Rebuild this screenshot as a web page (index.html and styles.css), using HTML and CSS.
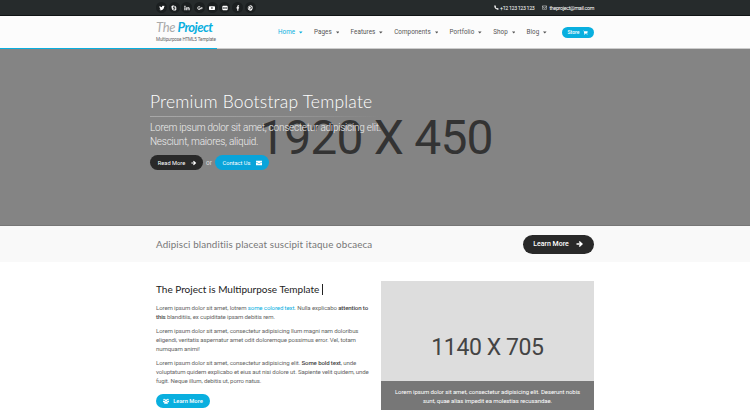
FILE: index.html
```html
<!DOCTYPE html>
<html lang="en">
<head>
<meta charset="utf-8">
<title>The Project</title>
<link rel="stylesheet" href="styles.css">
</head>
<body>
<div class="topbar">
  <div class="container topbar-row">
    <ul class="social">
      <li><svg viewBox="0 0 16 16"><path d="M15 4l-1.500 1.500C13.500 11 9.500 14 5.500 14 3.500 14 2 13.500 1 12.600c1.700 0 3-.4 4-1.200-1.400-.2-2.300-1-2.700-2h1.200C2 8.800 1.200 7.700 1.200 6.300l1.200.3C1.200 5.500 1 4 1.700 2.600 3.300 4.500 5.300 5.600 8 5.700 7.600 3.500 9 2 10.800 2c.9 0 1.600.4 2.100.9L14.700 2.200 13.800 3.800z"/></svg></li>
      <li><svg viewBox="0 0 16 16"><path fill-rule="evenodd" d="M5 1a4 4 0 0 1 3 1 6 6 0 0 1 6 7.500A4 4 0 0 1 8.500 14.500 6 6 0 0 1 2 7.500 4 4 0 0 1 5 1zM8 4C4 4 4 8 7 8.500c3 .5 2.500 2 1 2S6.500 9 5.500 9C3.500 9.500 5 12.300 8 12.300c4.500 0 4.500-4.300 1-5C6.500 6.800 6.500 6 8 6s1.500 1 2.500 1C12.500 6.500 11 4 8 4z"/></svg></li>
      <li><svg viewBox="0 0 16 16"><path d="M1 6h3v8H1zM1 2h3v3H1zM6 6h3v1c1-2 6-2 6 2v5h-3V9.500C12 8 9 8 9 9.500V14H6z"/></svg></li>
      <li><svg viewBox="0 0 16 16"><path d="M5.500 7v2h2.700c-.6 2.600-5 2-5-1s3.300-3.500 4.500-2L9 4.500C6 1.500 1 3.500 1 8s4.500 6 7.500 4c1.700-1.200 2-3 1.700-5zM12 5h1.500v2H16v1.700h-2.500V11H12V8.700h-2V7h2z"/></svg></li>
      <li><svg viewBox="0 0 16 16"><path fill-rule="evenodd" d="M2 3h12q2 0 2 2v6q0 2-2 2H2q-2 0-2-2V5q0-2 2-2zM6.500 5.500v5L11 8z"/></svg></li>
      <li><svg viewBox="0 0 16 16"><path fill-rule="evenodd" d="M3 2h10q2 0 2 2v8q0 2-2 2H3q-2 0-2-2V4q0-2 2-2zM3.500 6v4h3.500V6zM9 6v4h3.500V6z"/></svg></li>
      <li><svg viewBox="0 0 16 16"><path d="M6 15V9H4V6h2V4c0-2.500 2-3.500 5-3v2.500C9.500 3.300 9 3.500 9 4.500V6h2l-.4 3H9v6z"/></svg></li>
      <li><svg viewBox="0 0 16 16"><path fill-rule="evenodd" d="M8 1a7 7 0 1 1-2 13.700L7 11 8 7h1l-1 3c3 0 3.500-5 0-5.200S4 7.500 5.500 9L5 10C1.500 7.500 4 3 8 3s5.500 3 4 6-3.500 3-4.500 2l-1 3.500A7 7 0 0 1 8 1z"/></svg></li>
    </ul>
    <div class="contact">
      <svg viewBox="0 0 16 16"><path d="M4 1l2.500 4L5 6.500C6 8.500 7.500 10 9.500 11L11 9.500l4 2.500c0 2-1.500 3-3 3C6 15 1 9 1 4c0-1.500 1-3 3-3z"/></svg><span class="phone">+12 123 123 123</span>
      <svg class="mail" viewBox="0 0 16 16"><path class="line" d="M1 3h14v10.500H1zM1 5l7 5 7-5"/></svg><span class="email">theproject@mail.com</span>
    </div>
  </div>
</div>
<header class="header">
  <div class="container header-row">
    <div class="brand">
      <div class="logo"><span class="the">The</span> <span class="project">Project</span></div>
      <div class="slogan">Multipurpose HTML5 Template</div>
    </div>
    <nav class="nav">
      <a class="active">Home<svg viewBox="0 0 8 6"><path d="M0 1h8L4 5.500z"/></svg></a>
      <a>Pages<svg viewBox="0 0 8 6"><path d="M0 1h8L4 5.500z"/></svg></a>
      <a>Features<svg viewBox="0 0 8 6"><path d="M0 1h8L4 5.500z"/></svg></a>
      <a>Components<svg viewBox="0 0 8 6"><path d="M0 1h8L4 5.500z"/></svg></a>
      <a>Portfolio<svg viewBox="0 0 8 6"><path d="M0 1h8L4 5.500z"/></svg></a>
      <a>Shop<svg viewBox="0 0 8 6"><path d="M0 1h8L4 5.500z"/></svg></a>
      <a>Blog<svg viewBox="0 0 8 6"><path d="M0 1h8L4 5.500z"/></svg></a>
    </nav>
    <a class="store">Store <svg viewBox="0 0 16 16"><path d="M0 2h3l.5 2H15l-1 5.500-9 1V11.500h9V12.500H4L2.500 3H0z"/><circle cx="5" cy="14" r="1.500"/><circle cx="13" cy="14" r="1.500"/></svg></a>
  </div>
  <div class="progress"></div>
</header>
<section class="banner">
  <div class="size-label">1920 X 450</div>
  <div class="banner-copy">
    <h1>Premium Bootstrap Template</h1>
    <div class="rule"></div>
    <p>Lorem ipsum dolor sit amet, consectetur adipisicing elit.<br>Nesciunt, maiores, aliquid.</p>
    <div class="actions">
      <a class="btn dark">Read More<svg viewBox="0 0 16 16"><path d="M1 6.500h7L5.500 4 7.500 2l6.500 6-6.500 6-2-2L8 9.500H1z"/></svg></a>
      <span class="or">or</span>
      <a class="btn blue">Contact Us<svg viewBox="0 0 16 16"><path d="M0 2h16v2.500L8 9 0 4.500zM0 6l8 4.500L16 6v8H0z"/></svg></a>
    </div>
  </div>
</section>
<section class="cta">
  <div class="container cta-row">
    <span class="cta-text">Adipisci blanditiis placeat suscipit itaque obcaeca</span>
    <a class="cta-btn">Learn More<svg viewBox="0 0 16 16"><path d="M1 6.500h7L5.500 4 7.500 2l6.500 6-6.500 6-2-2L8 9.500H1z"/></svg></a>
  </div>
</section>
<main class="container main">
  <article class="copy">
    <h2>The Project is Multipurpose Template<span class="caret"></span></h2>
    <p>Lorem ipsum dolor sit amet, lotrem <a>some colored text</a>. Nulla explicabo <b>attention to<br>this</b> blanditiis, ex cupiditate ipsam debitis rem.</p>
    <p>Lorem ipsum dolor sit amet, consectetur adipisicing llum magni nam doloribus<br>eligendi, veritatis aspernatur amet odit doloremque possimus error. Vel, totam<br>numquam animi!</p>
    <p>Lorem ipsum dolor sit amet, consectetur adipisicing elit. <b>Some bold text</b>, unde<br>voluptatum quidem explicabo et eius aut nisi dolore ut. Sapiente velit quidem, unde<br>fugit. Neque illum, debitis ut, porro natus.</p>
    <a class="more"><svg viewBox="0 0 16 16"><circle cx="3" cy="4" r="2.200"/><circle cx="13" cy="4" r="2.200"/><circle cx="8" cy="6" r="3"/><path d="M0 7h4l2 3-2 1H0zM16 7h-4l-2 3 2 1h4zM3 15q0-6 3-6h4q3 0 3 6z"/></svg>Learn More</a>
  </article>
  <figure class="picture">
    <div class="picture-size">1140 X 705</div>
    <figcaption>Lorem ipsum dolor sit amet, consectetur adipisicing elit. Deserunt nobis<br>sunt, quae alias impedit ea molestias recusandae.</figcaption>
  </figure>
</main>
</body>
</html>
```
FILE: styles.css
```css
* { box-sizing: border-box; }
body { margin: 0; height: 410px; overflow: hidden; background: #fff; font-family: Roboto, "Liberation Sans", sans-serif; color: #666; white-space: nowrap; }
h1, h2, p, ul, figure { margin: 0; padding: 0; }
svg { display: block; fill: currentColor; flex: none; }
.container { width: 438px; margin-left: 156px; }
.topbar { height: 16px; background: #262b2c; border-bottom: 1px solid #101415; }
.topbar-row { display: flex; justify-content: space-between; align-items: center; height: 15px; }
.social { display: flex; gap: 1.700px; list-style: none; }
.social li { display: flex; align-items: center; justify-content: center; width: 11px; height: 11px; border-radius: 50%; background: #1b1f20; color: #fff; }
.social svg { width: 6px; height: 6px; }
.contact { display: flex; align-items: center; color: #fff; font-size: 5.300px; }
.phone { letter-spacing: -0.360px; }
.email { letter-spacing: -0.310px; }
.contact svg { width: 5px; height: 5px; margin-right: 1px; }
.contact .mail { margin: 0 2px 0 8px; }
.line { fill: none; stroke: currentColor; stroke-width: 1.500; }
.header { height: 33px; background: #fcfcfc; }
.header-row { display: flex; height: 32px; }
.progress { height: 1px; background: linear-gradient(90deg, #09afdf 217px, #ccc 217px); }
.brand { width: 122px; padding-top: 3px; }
.logo { height: 17px; font: italic 700 13px/17px Lato, cursive; letter-spacing: -0.550px; }
.the { color: #aaa; font-weight: 400; letter-spacing: -0.300px; }
.project { color: #09afdf; }
.slogan { font-size: 4.600px; line-height: 6px; margin-top: 1px; letter-spacing: -0.130px; }
.nav { display: flex; gap: 11.200px; padding-top: 11px; height: 22px; font-size: 6.300px; line-height: 11px; letter-spacing: 0.060px; color: #555; }
.nav a { display: flex; align-items: center; height: 11px; }
.nav svg { width: 3.600px; height: 2.700px; margin-left: 4px; }
.nav .active { color: #09afdf; }
.store { display: flex; align-items: center; justify-content: center; gap: 4px; width: 32px; height: 11px; margin: 11px 0 0 auto; border-radius: 6px; background: #09afdf; color: #fff; font: 500 5px/11px Roboto, sans-serif; }
.store svg { width: 5px; height: 5px; }
.banner { position: relative; height: 177px; background: #848484; border-bottom: 1px solid #777; }
.size-label { position: absolute; left: 258px; top: 61px; font-size: 48px; line-height: 56px; letter-spacing: -0.800px; color: #333; }
.banner-copy { position: relative; padding: 42px 0 0 150px; color: #fff; }
h1 { font: 300 17.500px/22px Lato, sans-serif; letter-spacing: 0.190px; }
.rule { width: 230px; height: 1px; margin: 3px 0 4px; background: linear-gradient(90deg, #a8a8a8, #989898 60%, transparent); }
.banner-copy p { font-size: 10px; font-weight: 300; line-height: 14px; letter-spacing: -0.230px; color: #eee; }
.actions { display: flex; align-items: center; margin-top: 6px; }
.btn { display: flex; align-items: center; justify-content: center; gap: 6px; height: 15px; border-radius: 8px; font-size: 5.700px; }
.btn svg { width: 6px; height: 6px; }
.dark { width: 53px; padding-left: 2px; background: #292929; }
.blue { width: 54px; padding-left: 1px; background: #09a4da; }
.or { width: 12px; text-align: center; font-size: 6.500px; color: #ddd; }
.cta { height: 36px; background: #f9f9f9; }
.cta-row { display: flex; align-items: center; justify-content: space-between; height: 36px; }
.cta-text { font: 400 9.800px/14px Lato, sans-serif; letter-spacing: 0.130px; margin-top: -1px; color: #777; }
.cta-btn { display: flex; align-items: center; justify-content: center; gap: 7px; width: 71px; height: 19px; border-radius: 10px; background: #292929; color: #fff; font-size: 7px; font-weight: 500; }
.cta-btn svg { width: 8px; height: 8px; }
.main { display: flex; justify-content: space-between; padding-top: 19px; }
.copy { width: 220px; }
h2 { display: flex; align-items: center; height: 16px; margin-bottom: 7px; font: 400 10px/16px Lato, sans-serif; color: #222; }
.caret { width: 1px; height: 11px; margin-left: 3px; background: #222; }
.copy p { font-size: 6.100px; line-height: 8.600px; margin-bottom: 6.200px; letter-spacing: -0.130px; }
.copy p a { color: #09afdf; }
.copy b { font-weight: 500; color: #444; }
.more { display: flex; align-items: center; justify-content: center; gap: 4px; width: 54px; height: 14px; margin-top: 8.500px; border-radius: 7px; background: #09afdf; color: #fff; font-size: 5.800px; font-weight: 500; }
.more svg { width: 6px; height: 6px; }
.picture { display: flex; flex-direction: column; width: 213px; height: 129px; background: #ddd; }
.picture-size { height: 100px; padding-top: 53px; text-align: center; font-size: 23px; line-height: 28px; letter-spacing: -0.400px; color: #444; }
figcaption { flex: 1; padding-top: 7px; background: #777; color: #fff; text-align: center; font-size: 6px; line-height: 8.700px; letter-spacing: -0.080px; }
```
